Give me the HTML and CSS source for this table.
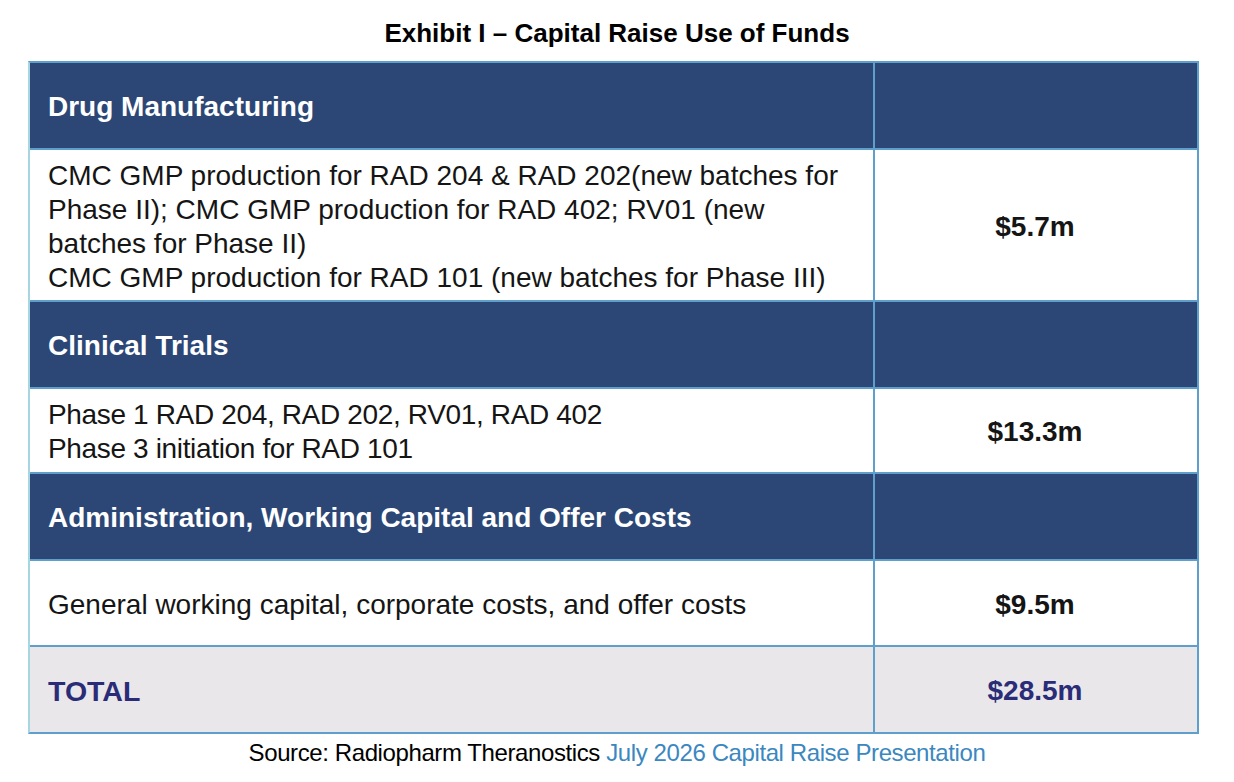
FILE: index.html
```html
<!DOCTYPE html>
<html lang="en">
<head>
<meta charset="utf-8">
<title>Exhibit I – Capital Raise Use of Funds</title>
<link rel="stylesheet" href="styles.css">
</head>
<body>
<div class="page">
  <h1 class="title">Exhibit I – Capital Raise Use of Funds</h1>
  <div class="funds">
    <div class="cell head label h87">Drug Manufacturing</div>
    <div class="cell head value h87"></div>
    <div class="cell body label h152">CMC GMP production for RAD 204 &amp; RAD 202(new batches for<br>Phase II); CMC GMP production for RAD 402; RV01 (new<br>batches for Phase II)<br>CMC GMP production for RAD 101 (new batches for Phase III)</div>
    <div class="cell body value h152">$5.7m</div>
    <div class="cell head label h87">Clinical Trials</div>
    <div class="cell head value h87"></div>
    <div class="cell body label narrow h85">Phase 1 RAD 204, RAD 202, RV01, RAD 402<br>Phase 3 initiation for RAD 101</div>
    <div class="cell body value h85">$13.3m</div>
    <div class="cell head label h87">Administration, Working Capital and Offer Costs</div>
    <div class="cell head value h87"></div>
    <div class="cell body label h86">General working capital, corporate costs, and offer costs</div>
    <div class="cell body value h86">$9.5m</div>
    <div class="cell total label last">TOTAL</div>
    <div class="cell total value last">$28.5m</div>
  </div>
  <p class="source">Source: Radiopharm Theranostics <a class="link" href="#">July 2026 Capital Raise Presentation</a></p>
</div>
</body>
</html>
```
FILE: styles.css
```css
html, body {
  margin: 0;
  padding: 0;
  background: #ffffff;
}
.page {
  width: 1234px;
  font-family: "Liberation Sans", Arial, sans-serif;
  color: #111111;
}
.title {
  margin: 0;
  height: 61px;
  box-sizing: border-box;
  padding-top: 18px;
  font-size: 26px;
  line-height: 30px;
  font-weight: bold;
  text-align: center;
  color: #000;
}
.funds {
  margin-left: 28px;
  width: 1171px;
  box-sizing: border-box;
  display: grid;
  grid-template-columns: 845px 1fr;
  border: 2px solid #5f9fcb;
  border-left-color: #a6d6df;
}
.cell {
  box-sizing: border-box;
  display: flex;
  align-items: center;
  padding-top: 3px;
  border-bottom: 2px solid #5f9fcb;
  font-size: 28px;
  line-height: 34px;
}
.cell.last {
  border-bottom: none;
  height: 85px;
}
.label {
  padding-left: 18px;
  border-right: 2px solid #5f9fcb;
}
.value {
  justify-content: center;
  font-weight: bold;
  padding-right: 2px;
}
.h87 { height: 87px; }
.h152 { height: 152px; }
.h85 { height: 85px; }
.h86 { height: 86px; }
.head {
  background: #2c4775;
  color: #ffffff;
  font-weight: bold;
}
.body {
  background: #ffffff;
  color: #151515;
}
.body.narrow {
  letter-spacing: -0.35px;
}
.total {
  background: #e9e7e9;
  color: #2a2c78;
  font-weight: bold;
}
.total.label {
  font-size: 28.5px;
}
.source {
  margin: 0;
  padding-top: 4px;
  text-align: center;
  font-size: 24px;
  line-height: 30px;
  color: #000;
  letter-spacing: -0.4px;
}
.link {
  color: #3b87c0;
  text-decoration: none;
}
```
